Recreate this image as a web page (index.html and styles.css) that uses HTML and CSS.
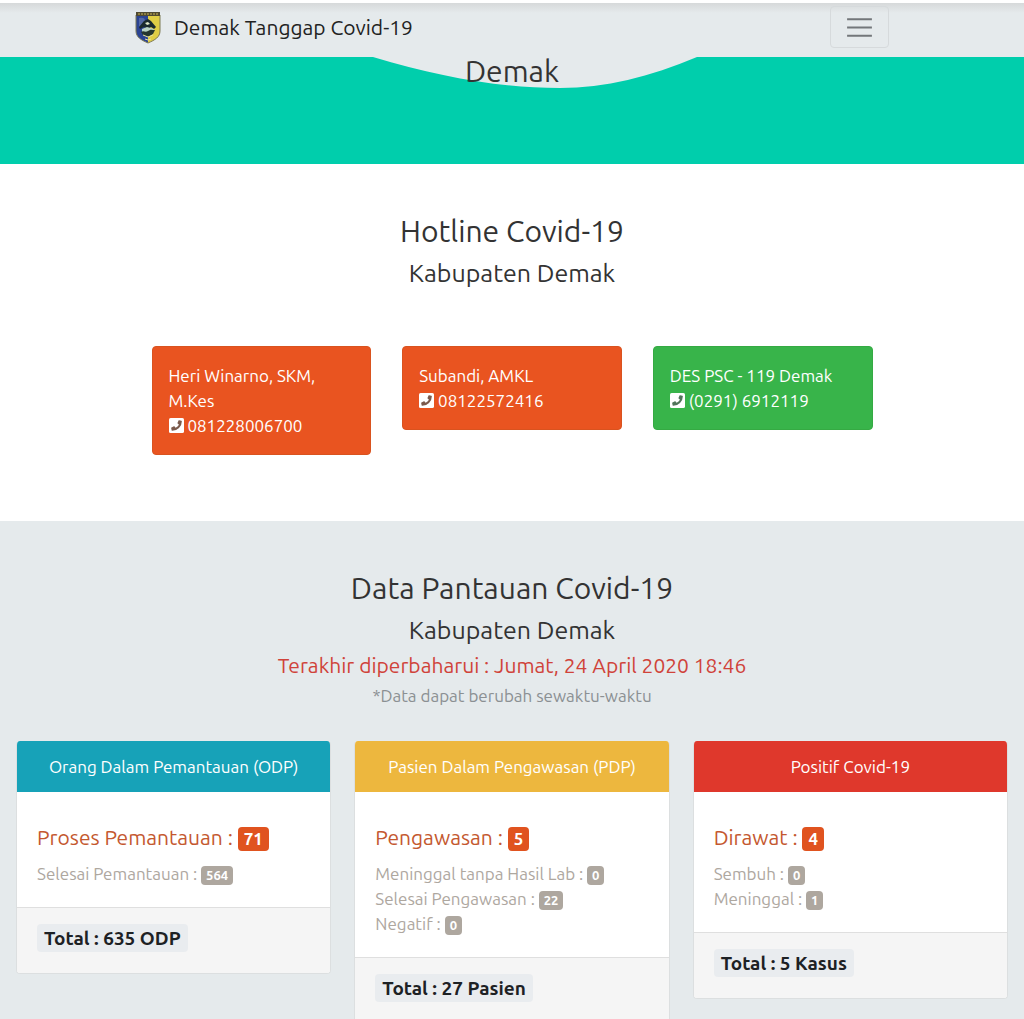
FILE: index.html
```html
<!DOCTYPE html>
<html lang="id">
<head>
  <meta charset="utf-8">
  <meta name="viewport" content="width=device-width, initial-scale=1">
  <title>Demak Tanggap Covid-19</title>
  <link rel="stylesheet" href="styles.css">
</head>
<body>
  <header class="navbar">
    <div class="navbar-inner">
      <a class="brand" href="#">
        <svg class="brand-logo" viewBox="0 0 26 33" aria-hidden="true">
          <path d="M1 4h12v28C6 29 1 26 1 20z" fill="#2b4493"/>
          <path d="M13 4h12v16c0 6-5 9-12 12z" fill="#dfce45"/>
          <path d="M1 4h24v16c0 6-5 9-12 12C6 29 1 26 1 20z" fill="none" stroke="#7d7a55" stroke-width="1"/>
          <path d="M1 1h24v4H1z" fill="#504a32"/>
          <path d="M3 3h20" stroke="#a3924a" stroke-width="1.500" stroke-dasharray="2 1"/>
          <path d="M4 7c4-1 6 0 6 3l-4 5-2 1z" fill="#5469a5"/>
          <path d="M13 8l3 2 5 6-2 2-3-2-3 2-4-2-4 2-1-2 5-6z" fill="#1a2b2f"/>
          <path d="M10 12l3-1 2 2-3 1z" fill="#dfe8c9"/>
          <path d="M7 18l5-2 7 2-2 5-6 1-4-2z" fill="#b9d3c4"/>
          <path d="M6 21c3-2 4 1 7-1s4-1 7-1l-2 4-5 3-5-2z" fill="#26372f"/>
          <path d="M8 24l5 2 5-2M10 28l3 1 3-1" stroke="#e6e3a0" fill="none"/>
        </svg>
        <span>Demak Tanggap Covid-19</span>
      </a>
      <button class="menu-button" type="button" aria-label="Menu">
        <svg viewBox="0 0 30 30" aria-hidden="true"><path d="M3 7h24M3 15h24M3 23h24" stroke="#73777a" stroke-width="2"/></svg>
      </button>
    </div>
  </header>

  <main>
    <section class="hero">
      <svg class="wave" viewBox="0 0 1024 107" preserveAspectRatio="none" aria-hidden="true">
        <path d="M0 0H373C440 20 500 31 560 31C605 31 650 20 697 0H1024V107H0Z" fill="#00ceac"/>
      </svg>
      <h1 class="title">Demak</h1>
    </section>

    <section class="hotline">
      <h2 class="title">Hotline Covid-19</h2>
      <p class="subtitle">Kabupaten Demak</p>
      <div class="contacts">
        <a class="contact" href="tel:081228006700">Heri Winarno, SKM, M.Kes<br>
          <svg class="phone" viewBox="0 0 14 14" aria-hidden="true"><rect width="14" height="14" rx="1.500" fill="#fff"/><path d="M9.400 2l2.200.5c.3.100.4.300.4.500A9 9 0 0 1 3 12c-.2 0-.4-.2-.5-.4L2 9.400c0-.2.100-.5.300-.6l2.300-1c.2-.1.500 0 .6.200l1 1.200A7.200 7.200 0 0 0 9.300 6.200L8.100 5.200c-.2-.2-.3-.4-.2-.6l1-2.300c.100-.2.300-.3.500-.3z" fill="#7b5a4c"/></svg>
          081228006700</a>
        <a class="contact" href="tel:08122572416">Subandi, AMKL<br>
          <svg class="phone" viewBox="0 0 14 14" aria-hidden="true"><rect width="14" height="14" rx="1.500" fill="#fff"/><path d="M9.400 2l2.200.5c.3.100.4.300.4.500A9 9 0 0 1 3 12c-.2 0-.4-.2-.5-.4L2 9.400c0-.2.100-.5.300-.6l2.300-1c.2-.1.500 0 .6.200l1 1.200A7.200 7.200 0 0 0 9.300 6.200L8.100 5.200c-.2-.2-.3-.4-.2-.6l1-2.300c.100-.2.300-.3.500-.3z" fill="#7b5a4c"/></svg>
          08122572416</a>
        <a class="contact contact-green" href="tel:02916912119">DES PSC - 119 Demak<br>
          <svg class="phone" viewBox="0 0 14 14" aria-hidden="true"><rect width="14" height="14" rx="1.500" fill="#fff"/><path d="M9.400 2l2.200.5c.3.100.4.300.4.500A9 9 0 0 1 3 12c-.2 0-.4-.2-.5-.4L2 9.400c0-.2.100-.5.300-.6l2.300-1c.2-.1.500 0 .6.200l1 1.200A7.200 7.200 0 0 0 9.300 6.200L8.100 5.200c-.2-.2-.3-.4-.2-.6l1-2.300c.100-.2.300-.3.500-.3z" fill="#51745a"/></svg>
          (0291) 6912119</a>
      </div>
    </section>

    <section class="data">
      <h2 class="title">Data Pantauan Covid-19</h2>
      <p class="subtitle">Kabupaten Demak</p>
      <p class="updated">Terakhir diperbaharui : Jumat, 24 April 2020 18:46</p>
      <p class="note">*Data dapat berubah sewaktu-waktu</p>
      <div class="cards">
        <article class="card">
          <h3 class="card-header header-odp">Orang Dalam Pemantauan (ODP)</h3>
          <div class="card-body">
            <p class="lead">Proses Pemantauan : <span class="badge badge-orange">71</span></p>
            <p class="stat">Selesai Pemantauan : <span class="badge">564</span></p>
          </div>
          <div class="card-footer"><strong class="total">Total : 635 ODP</strong></div>
        </article>
        <article class="card">
          <h3 class="card-header header-pdp">Pasien Dalam Pengawasan (PDP)</h3>
          <div class="card-body">
            <p class="lead">Pengawasan : <span class="badge badge-orange">5</span></p>
            <p class="stat">Meninggal tanpa Hasil Lab : <span class="badge">0</span></p>
            <p class="stat">Selesai Pengawasan : <span class="badge">22</span></p>
            <p class="stat">Negatif : <span class="badge">0</span></p>
          </div>
          <div class="card-footer"><strong class="total">Total : 27 Pasien</strong></div>
        </article>
        <article class="card">
          <h3 class="card-header header-positive">Positif Covid-19</h3>
          <div class="card-body">
            <p class="lead">Dirawat : <span class="badge badge-orange">4</span></p>
            <p class="stat">Sembuh : <span class="badge">0</span></p>
            <p class="stat">Meninggal : <span class="badge">1</span></p>
          </div>
          <div class="card-footer"><strong class="total">Total : 5 Kasus</strong></div>
        </article>
      </div>
    </section>
  </main>
</body>
</html>
```
FILE: styles.css
```css
* {
  box-sizing: border-box;
}

body {
  margin: 0;
  background: #fff;
  color: #333;
  font-family: Ubuntu, "Noto Sans", "Open Sans", sans-serif;
  font-size: 17px;
  line-height: 25px;
}

h1, h2, h3, p {
  margin: 0;
  font-weight: 400;
}

.navbar {
  position: sticky;
  top: 0;
  z-index: 1;
  border-top: 3px solid #fff;
  background: linear-gradient(#d6d9da, #e5eaec 10px);
}

.navbar-inner {
  display: flex;
  align-items: center;
  justify-content: space-between;
  max-width: 754px;
  margin: 0 auto;
  padding: 3px 0 9px;
}

.brand {
  display: flex;
  align-items: center;
  gap: 13px;
  color: #222;
  font-size: 21px;
  text-decoration: none;
}

.brand-logo {
  width: 26px;
  height: 33px;
}

.menu-button {
  display: grid;
  place-items: center;
  width: 59px;
  height: 42px;
  padding: 0;
  border: 1px solid #d6dadc;
  border-radius: 4px;
  background: transparent;
}

.menu-button svg {
  width: 31px;
  height: 31px;
}

.title {
  font-size: 30px;
  line-height: 37px;
  text-align: center;
}

.subtitle {
  margin-top: 5px;
  font-size: 25px;
  line-height: 36px;
  text-align: center;
}

.hero {
  display: grid;
  background: #e5eaec;
}

.hero > * {
  grid-area: 1 / 1;
}

.wave {
  width: 100%;
  height: 107px;
}

.hero .title {
  position: relative;
  margin-top: -4px;
}

.hotline {
  padding: 49px 16px 66px;
}

.contacts {
  display: grid;
  grid-template-columns: repeat(3, 1fr);
  align-items: start;
  gap: 31px;
  max-width: 721px;
  margin: 55px auto 0;
}

.contact {
  padding: 16px;
  border: 1px solid #d9531f;
  border-radius: 4px;
  background: #e95420;
  color: #fff;
  text-decoration: none;
}

.contact-green {
  border-color: #35aa43;
  background: #38b44a;
}

.phone {
  width: 15px;
  height: 15px;
  vertical-align: -1px;
}

.data {
  padding: 49px 16px 24px;
  background: #e5eaec;
}

.updated {
  margin-top: 1px;
  color: #d0433a;
  font-size: 21px;
  line-height: 32px;
  text-align: center;
}

.note {
  margin-top: 2px;
  color: #8b9093;
  text-align: center;
}

.cards {
  display: grid;
  grid-template-columns: repeat(3, 1fr);
  align-items: start;
  gap: 23px;
  margin-top: 33px;
}

.card {
  overflow: hidden;
  border: 1px solid #dcdfe0;
  border-top: 0;
  border-radius: 4px;
  background: #fff;
}

.card-header {
  margin: 0 -1px;
  padding: 13px 20px;
  color: #fff;
  font-size: 17px;
  text-align: center;
}

.header-odp {
  background: #17a2b8;
}

.header-pdp {
  background: #edb73e;
}

.header-positive {
  background: #df382c;
}

.card-body {
  padding: 28px 20px 21px;
}

.lead {
  margin-bottom: 7px;
  color: #c4582f;
  font-size: 21px;
  line-height: 34px;
}

.stat {
  color: #aea79f;
}

.badge {
  display: inline-block;
  padding: 0 5px;
  border-radius: 4px;
  background: #aea79f;
  color: #fff;
  font-size: 13px;
  font-weight: 700;
  line-height: 19px;
  vertical-align: baseline;
}

.badge-orange {
  padding: 0 6px;
  background: #e0531f;
  font-size: 17px;
  line-height: 24px;
}

.card-footer {
  padding: 16px 20px 21px;
  border-top: 1px solid #dfdfdf;
  background: #f5f5f5;
}

.total {
  display: inline-block;
  padding: 0 7px;
  border-radius: 4px;
  background: #e9ecef;
  color: #1d2124;
  font-size: 19px;
  line-height: 28px;
}
```
